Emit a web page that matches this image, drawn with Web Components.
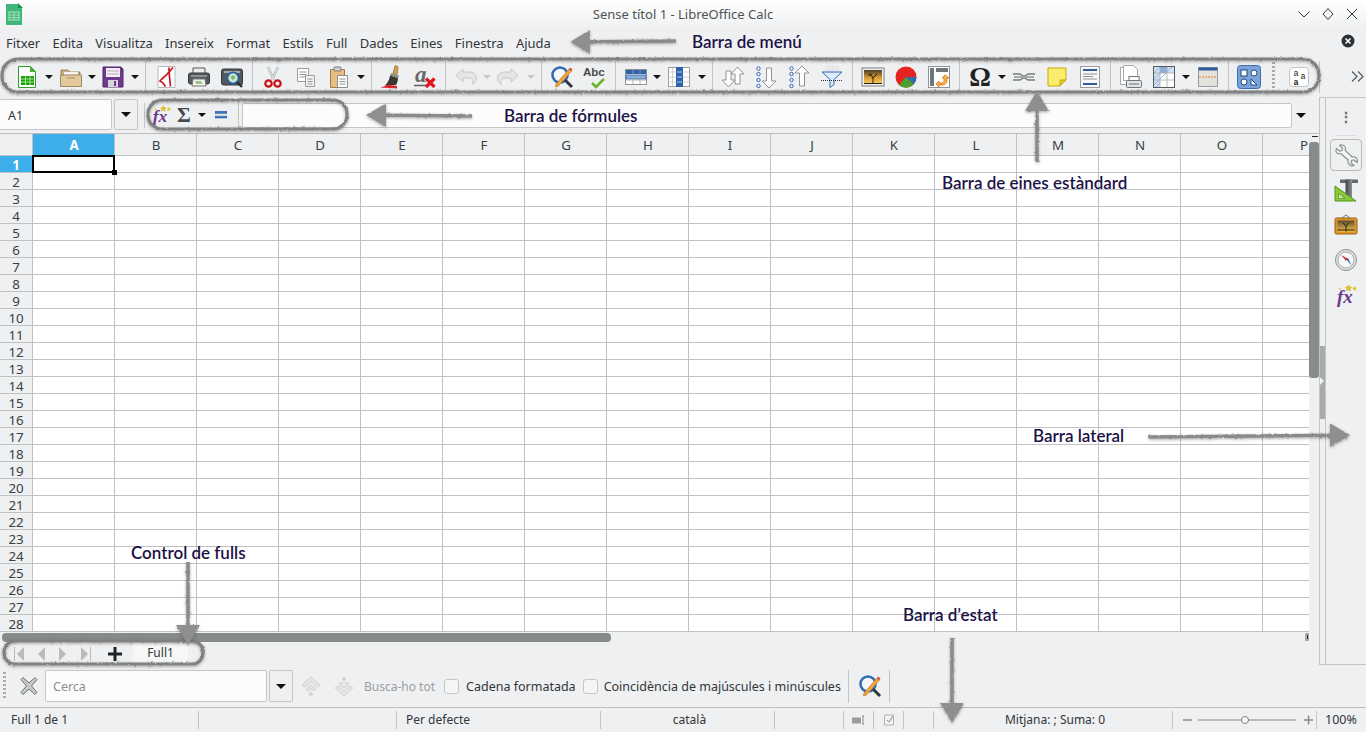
<!DOCTYPE html>
<html lang="ca">
<head>
<meta charset="UTF-8">
<title>Sense títol 1 - LibreOffice Calc</title>
<style>
  html, body { margin: 0; padding: 0; height: 100%; overflow: hidden; background: #eff0f1; }
  body { font: 12.5px "Noto Sans", sans-serif; color: #31363b; }
</style>
</head>
<body>
<lo-app>
  <lo-titlebar slot="title">Sense títol 1 - LibreOffice Calc</lo-titlebar>
  <lo-menubar slot="menu"></lo-menubar>
  <lo-toolbar slot="tools"></lo-toolbar>
  <lo-formulabar slot="formula"></lo-formulabar>
  <lo-sheet slot="sheet"></lo-sheet>
  <lo-sheetbar slot="tabs"></lo-sheetbar>
  <lo-sidebar slot="side"></lo-sidebar>
  <lo-findbar slot="find"></lo-findbar>
  <lo-statusbar slot="status"></lo-statusbar>
  <lo-notes slot="notes"></lo-notes>
</lo-app>
<script>
// small icon set, all on a 24 box
const ICONS = {
  new: `<path d="M3.5 1.5h12l5 5v16h-17z" fill="#fff" stroke="#2f9e2a"/><path d="M15 1l6 6h-6z" fill="#43b02a"/><rect x="6" y="11" width="13" height="9" fill="#18a303"/><path d="M6 14h13M6 17h13M10.5 11v9M15 11v9" stroke="#c9efc4" stroke-width=".8"/>`,
  open: `<path d="M2 5h7l2 2h10v3H2z" fill="#c7ad84" stroke="#8c7350" stroke-width=".8"/><path d="M5 7h14v5H5z" fill="#f4f4f1"/><path d="M1.5 10h21v11.5h-21z" fill="#e3c99c" stroke="#a08860"/><path d="M8 13h8" stroke="#a08860"/>`,
  save: `<path d="M2 2h18l2 2v18H2z" fill="#6f3a8c" stroke="#50256a"/><rect x="5" y="3" width="14" height="9" fill="#f2f0f4"/><path d="M6 6h12M6 9h12" stroke="#b9a8c6"/><rect x="7" y="15" width="10" height="7" fill="#d7d2dc"/><rect x="13" y="16" width="2" height="5" fill="#6f3a8c"/>`,
  pdf: `<path d="M4 1.500h17v21H4z" fill="#fff" stroke="#b9b9b9"/><path d="M19 2.500C15 7 14 9 9 13c-1.500 1.200-2 2-3 3 3 1 4 3 5.500 5.500M15 2.500c0 7 1 13 1.500 19" fill="none" stroke="#c8171d" stroke-width="1.700"/>`,
  print: `<path d="M6 3h12v6H6z" fill="#eee" stroke="#555"/><rect x="1.5" y="8" width="21" height="11" rx="2" fill="#55595b" stroke="#34383a"/><rect x="4" y="10" width="16" height="2" fill="#8a8e90"/><path d="M6 14h12l1 7H5z" fill="#f3f6ee" stroke="#777"/><path d="M8 16h6l2 3H9z" fill="#9cc38f"/>`,
  preview: `<rect x="1.5" y="4" width="21" height="16" rx="2" fill="#55595b" stroke="#34383a"/><rect x="4" y="6" width="16" height="2" fill="#a5a8aa"/><circle cx="13" cy="13" r="5.6" fill="#cfe4c9" stroke="#1d5fa8" stroke-width="1.8"/><path d="M10.5 12l3-2 2 3-3 2z" fill="#7fb16f"/><path d="M17 17l5 5" stroke="#2b2f31" stroke-width="2.4"/>`,
  cut: `<path d="M7 2l6 13M17 2l-6 13" stroke="#b4b8ba" stroke-width="2.4"/><path d="M7 2l6 13M17 2l-6 13" stroke="#eceeef" stroke-width=".8"/><circle cx="7.5" cy="18.5" r="3.2" fill="#f6e5e5" stroke="#c3141c" stroke-width="2.2"/><circle cx="16.5" cy="18.5" r="3.2" fill="#f6e5e5" stroke="#c3141c" stroke-width="2.2"/>`,
  copy: `<path d="M3.5 3.5h11v13h-11z" fill="#fff" stroke="#9a9c9d"/><path d="M5.5 7h7M5.5 9.5h7M5.5 12h7" stroke="#8f9294"/><path d="M11.5 10.5h9v11h-9z" fill="#f4f4f4" stroke="#9a9c9d"/><path d="M13.5 14h5M13.5 16.5h5M13.5 19h5" stroke="#8f9294"/>`,
  paste: `<path d="M3.5 4.5h14v18h-14z" fill="#e8bd85" stroke="#a17a45"/><rect x="7" y="2" width="7" height="4" rx="1" fill="#cfd1d2" stroke="#777"/><path d="M10.5 10.5h10v12h-10z" fill="#fdfdfd" stroke="#8e8f90"/><path d="M12.5 14h6M12.5 16.5h6M12.5 19h6" stroke="#8f9294"/>`,
  brush: `<path d="M15 1c2-.5 3.500.5 3 2.500L17 9.500l-4-1z" fill="#d4a24c" stroke="#8a6420" stroke-width=".7"/><path d="M11 8l8 2.500-.8 2.500-8.200-2.500z" fill="#8e8f90"/><path d="M10 10.500l8 2.500c0 3-1 5.500-2 7H5c3-2 4.500-6 5-9.500z" fill="#3b3733"/><path d="M0 22.500c3-.5 5-1.500 7-3l10 1.500v2.500z" fill="#d7262c"/>`,
  clear: `<text x="2" y="17" font-family="Liberation Serif" font-style="italic" font-weight="700" font-size="23" fill="#66696c">a</text><path d="M1 20.500h14" stroke="#66696c" stroke-width="1.600"/><path d="M13 13.500l8.500 8.500M21.500 13.500L13 22" stroke="#e0161f" stroke-width="3.200"/>`,
  undo: `<path d="M9 4L2 10.500 9 17v-4h6c3 0 4 2 4 3.500 0 1.500-.5 2.500-1 3 3-1 4.500-3.500 4.500-6 0-3.500-3-6.500-7-6.500H9z" fill="#e4e5e6" stroke="#c6c8c9"/>`,
  redo: `<path d="M15 4l7 6.500L15 17v-4H9c-3 0-4 2-4 3.500 0 1.500.5 2.500 1 3-3-1-4.500-3.500-4.500-6C1.500 10 4.500 7 8.500 7H15z" fill="#e4e5e6" stroke="#c6c8c9"/>`,
  find: `<circle cx="10" cy="10" r="7.500" fill="#f4f8fc" stroke="#2f6db5" stroke-width="2.600"/><path d="M15 15l7 7" stroke="#30363a" stroke-width="3"/><path d="M6 19L19 4l2.500 2L8.500 21l-3 1z" fill="#f2a33c" stroke="#b86f17" stroke-width=".6"/><path d="M19 4l1-1.500 2.500 2L21.500 6z" fill="#d8434a"/>`,
  spell: `<text x="0" y="11" font-family="Liberation Sans" font-weight="700" font-size="11.500" fill="#444b4f">Abc</text><path d="M9 18l4 4 8-8" fill="none" stroke="#6cb52a" stroke-width="2.600"/>`,
  rowtbl: `<rect x="1.500" y="4.500" width="21" height="15" fill="#fff" stroke="#8f9294"/><rect x="2" y="5" width="20" height="4" fill="#2f62ad"/><rect x="2" y="10" width="20" height="4" fill="#8cb0dd" stroke="#2f62ad" stroke-width=".8"/><path d="M9 5v14M16 5v14M2 15h20" stroke="#9ea2a5" stroke-width=".8"/>`,
  coltbl: `<rect x="1.500" y="2.500" width="21" height="19" fill="#fff" stroke="#9ea2a5"/><rect x="9" y="2" width="7" height="20" fill="#2f62ad"/><path d="M10 7h5M10 12h5M10 17h5" stroke="#b7cdea"/><path d="M2 7h7M2 12h7M2 17h7M16 7h6M16 12h6M16 17h6M5.500 3v18" stroke="#c4c6c8" stroke-width=".8"/>`,
  sort: `<path d="M7.500 22L1 15h4V6h5v9h4z" fill="#fff" stroke="#8f9294"/><path d="M16.500 2L23 9h-4v10h-5V9h-4z" fill="#fff" stroke="#8f9294"/>`,
  asc: `<circle cx="4.500" cy="3.500" r="1.700" fill="#fff" stroke="#2f62ad"/><circle cx="4.500" cy="9" r="1.700" fill="#fff" stroke="#2f62ad"/><circle cx="4.500" cy="15" r="1.700" fill="#fff" stroke="#2f62ad"/><circle cx="4.500" cy="21" r="1.700" fill="#fff" stroke="#2f62ad"/><path d="M15 23l-7-7h4.500V3h5v13H22z" fill="#fff" stroke="#8f9294"/>`,
  desc: `<circle cx="4.500" cy="3.500" r="1.700" fill="#fff" stroke="#2f62ad"/><circle cx="4.500" cy="9" r="1.700" fill="#fff" stroke="#2f62ad"/><circle cx="4.500" cy="15" r="1.700" fill="#fff" stroke="#2f62ad"/><circle cx="4.500" cy="21" r="1.700" fill="#fff" stroke="#2f62ad"/><path d="M15 1l7 7h-4.500v13h-5V8H8z" fill="#fff" stroke="#8f9294"/>`,
  filter: `<path d="M5 1h14v5H5z" fill="#dfe1e2"/><path d="M5 2.500h14M5 4.500h14" stroke="#fff" stroke-dasharray="1 1"/><path d="M2 7h20l-8 7.500v5l-4 3v-8z" fill="#dcebfa" stroke="#2f6db5"/><path d="M1 15.500h22" stroke="#333" stroke-dasharray="1 1"/>`,
  image: `<defs><linearGradient id="sky" x1="0" y1="0" x2="0" y2="1"><stop offset="0" stop-color="#4c3c25"/><stop offset=".55" stop-color="#d99a37"/><stop offset="1" stop-color="#f7cf5d"/></linearGradient></defs><rect x="1" y="3" width="22" height="18" fill="#f1f1f1" stroke="#7b7d7f"/><rect x="3" y="5" width="18" height="14" fill="url(#sky)"/><path d="M12 19v-6l-3-5M12 13l4-4M10 10l-3 0M3 18.500h18" stroke="#26200f" fill="none"/>`,
  chart: `<circle cx="12" cy="12" r="10.500" fill="#e62323"/><path d="M12 12L20 19A10.500 10.500 0 0 1 5 20z" fill="#4aa02c"/><path d="M12 12L22.500 12A10.500 10.500 0 0 1 20 19z" fill="#2f6db5"/>`,
  pivot: `<rect x="1.500" y="1.500" width="21" height="21" fill="#fff" stroke="#8f9294"/><rect x="3" y="3" width="4" height="18" fill="#70757a"/><rect x="9" y="3" width="12" height="4" fill="#70757a"/><path d="M18 10l-3 3h2v3c0 1-1 2-2 2h-3v-2l-3 3 3 3v-2h3c3 0 5-2 5-4v-3h2z" fill="#fbb24c" stroke="#d6730e" stroke-width=".8"/>`,
  omega: `<text x="12" y="20.500" text-anchor="middle" font-family="Liberation Serif" font-weight="700" font-size="27" fill="#222">Ω</text>`,
  link: `<path d="M1 9h7l3 2h2l3-2h7M1 15h7l3-2h2l3 2h7" fill="none" stroke="#77797b" stroke-width="1.300"/><path d="M2 12h20" stroke="#a7a9ab" stroke-width="2"/>`,
  note: `<path d="M3 3h18v12l-6 6H3z" fill="#fcee6d" stroke="#c6a800"/><path d="M15 21v-6h6z" fill="#e3c92e" stroke="#c6a800"/>`,
  header: `<rect x="2.500" y="1.500" width="19" height="21" fill="#f7f7f7" stroke="#9a9c9d"/><rect x="5" y="4" width="14" height="2" fill="#2f5c9e"/><path d="M5 9h14M5 11.500h10M5 14h14" stroke="#8f9294"/><rect x="5" y="18" width="14" height="2" fill="#2f5c9e"/>`,
  area: `<path d="M1.500 2.500h9l3 3v14h-12z" fill="#fff" stroke="#a7a9ab"/><path d="M4.500 .5h10l4 4v11h-14z" fill="#fff" stroke="#a7a9ab"/><rect x="7.500" y="15.500" width="15" height="7" rx="1" fill="#e0e1e2" stroke="#70757a"/><rect x="10" y="11.500" width="10" height="4" fill="#fff" stroke="#70757a"/><path d="M10 19h10" stroke="#70757a"/>`,
  freeze: `<rect x="1.500" y="1.500" width="21" height="21" fill="#fff" stroke="#55595b"/><path d="M2 2h20v6H8v14H2z" fill="#cfe0f2"/><path d="M2 8l6-6M2 14l12-12M2 20L20 2M4 22l4-4" stroke="#8cb0dd" stroke-width=".9"/><rect x="8" y="2" width="7" height="6" fill="#8cb0dd"/><path d="M8 2v20M15 2v20M2 8h20M2 15h20" stroke="#a7a9ab" stroke-width=".8"/>`,
  split: `<rect x="2.500" y="2.500" width="19" height="19" fill="#e3e3dd" stroke="#9a9c9d"/><rect x="2.500" y="2.500" width="19" height="3" fill="#2f5c9e"/><path d="M3 12h18" stroke="#f07c12" stroke-dasharray="2 1"/>`,
  shapes: `<rect x=".500" y=".500" width="23" height="23" rx="3" fill="#7ba3d8" stroke="#3f6fae"/><rect x="4" y="5" width="6" height="6" fill="#fff" stroke="#1e4a86"/><circle cx="17" cy="8" r="3" fill="#fff" stroke="#1e4a86"/><circle cx="7" cy="17" r="3" fill="#fff" stroke="#1e4a86"/><path d="M14 14l6 6h-6z" fill="#fff" stroke="#1e4a86"/>`,
  aa: `<rect x="2.500" y="2.500" width="19" height="19" rx="3" fill="#fff" stroke="#c0c2c3"/><text x="9" y="10.500" text-anchor="middle" font-family="Liberation Mono" font-size="8.500" fill="#222">a</text><text x="16" y="14" text-anchor="middle" font-family="Liberation Mono" font-size="8.500" fill="#222">a</text><text x="9" y="20" text-anchor="middle" font-family="Liberation Mono" font-size="8.500" font-weight="700" fill="#222">a</text>`,
  fx: `<text x="3" y="20" font-family="Liberation Serif" font-style="italic" font-weight="700" font-size="19" fill="#6d3a8e">fx</text><path d="M14.500 2l1 2 2 .3-1.500 1.500.3 2-1.800-1-1.800 1 .3-2L11.500 4.300l2-.3z" fill="#e3c22c" stroke="#d0ac10" stroke-width=".6"/><path d="M20.500 3l.8 1.500 1.700.2-1.200 1.200.3 1.700-1.600-.8-1.500.8.300-1.700-1.200-1.200 1.700-.2z" fill="#e3c22c"/><circle cx="6" cy="6" r="1" fill="#e3c22c"/>`,
  sigma: `<text x="12" y="20" text-anchor="middle" font-family="Liberation Serif" font-weight="700" font-size="23" fill="#444b4f">Σ</text>`,
  equal: `<path d="M3 6h18v4H3zM3 13h18v4H3z" fill="#2f62ad"/><path d="M4 7.500h16M4 14.500h16" stroke="#8cb0dd" stroke-width=".8"/>`,
  wrench: `<path d="M2.500 5.500L5.500 8 8 7.500 8.500 5 5.500 2.500C8 1 11 2.500 11.500 5.500c0 1 0 1.500-.3 2l7 6.500c.5-.2 1.200-.3 1.800-.2 2.600.4 4 3 3 5.700l-3-2.500-2.500.5-.5 2.500 3 2.500c-3 1.200-6-1-6-3.800 0-.6 0-1.200.2-1.700L6.700 10.500c-.5.2-1 .3-1.700.3C2.500 10.500.8 8 2.500 5.500z" fill="#f3f4f4" stroke="#8f9294" stroke-width="1.200"/>`,
  props: `<defs><linearGradient id="tb" x1="0" y1="0" x2="1" y2="0"><stop offset="0" stop-color="#3f4345"/><stop offset="1" stop-color="#8f9294"/></linearGradient></defs><rect x="6" y="1.500" width="18" height="3.500" fill="#666a6c"/><rect x="11.500" y="1.500" width="6.500" height="20" fill="url(#tb)"/><path d="M1 8l21 15H1z" fill="#8dc63f" stroke="#4f9a14"/><path d="M4.500 15.500l6.500 5H4.500z" fill="#d9ecb8" stroke="#4f9a14" stroke-width=".8"/>`,
  gallery: `<path d="M8 5l4-3 4 3" fill="none" stroke="#555" stroke-width=".8"/><rect x="1" y="5" width="22" height="16" rx="1.500" fill="#e0962a" stroke="#94600f"/><defs><linearGradient id="gs" x1="0" y1="0" x2="0" y2="1"><stop offset="0" stop-color="#5a4a30"/><stop offset="1" stop-color="#f2c04f"/></linearGradient></defs><rect x="3.500" y="7.500" width="17" height="11" fill="url(#gs)"/><path d="M12 18.500v-5l-3-4M12 13.500l3-4M3.500 17h17" stroke="#2a200e" fill="none"/>`,
  compass: `<circle cx="12" cy="12" r="10.500" fill="#dfe1e2" stroke="#8f9294"/><circle cx="12" cy="12" r="8" fill="#f7f8f8" stroke="#a9abad"/><path d="M7 7l6.500 3.500L12 13z" fill="#d8343b"/><path d="M12 11l2-1 3.500 7.500z" fill="#2f62ad"/>`,
  close: `<path d="M4 5.500L6 3.500l6 5.500 6-5.500 2 2-5.500 6.500 5.500 6.500-2 2-6-5.500-6 5.500-2-2 5.500-6.500z" fill="#c9cbcb" stroke="#6b6e70"/>`,
  up: `<path d="M12 3l9 8-3 2-6-5-6 5-3-2z" fill="#e4e5e6" stroke="#d0d2d3"/><path d="M12 11l5 4-2 2-3-2.500L9 17l-2-2z" fill="#e4e5e6" stroke="#d0d2d3"/><circle cx="12" cy="20" r="2" fill="#d0d2d3"/>`,
  down: `<path d="M12 22l9-8-3-2-6 5-6-5-3 2z" fill="#e4e5e6" stroke="#d0d2d3"/><path d="M12 14l5-4-2-2-3 2.500L9 8l-2 2z" fill="#e4e5e6" stroke="#d0d2d3"/><circle cx="12" cy="5" r="2" fill="#d0d2d3"/>`
};

class LoIcon extends HTMLElement {
  connectedCallback() {
    const size = this.getAttribute('size') || 24;
    this.attachShadow({mode: 'open'}).innerHTML = `
      <style>:host { display: inline-flex; width: ${size}px; height: ${size}px; } svg { display: block; overflow: visible; }</style>
      <svg width="${size}" height="${size}" viewBox="0 0 24 24">${ICONS[this.getAttribute('name')] || ''}</svg>`;
  }
}

class LoApp extends HTMLElement {
  constructor() {
    super();
    this.attachShadow({mode: 'open'}).innerHTML = `
      <style>
        :host { display: flex; flex-direction: column; width: 1366px; height: 732px; position: relative; overflow: hidden; background: #eff0f1; }
        .main { display: flex; height: 568px; }
        .left { width: 1319px; display: flex; flex-direction: column; }
      </style>
      <slot name="title"></slot>
      <slot name="menu"></slot>
      <slot name="tools"></slot>
      <div class="main">
        <div class="left">
          <slot name="formula"></slot>
          <slot name="sheet"></slot>
          <slot name="tabs"></slot>
        </div>
        <slot name="side"></slot>
      </div>
      <slot name="find"></slot>
      <slot name="status"></slot>
      <slot name="notes"></slot>`;
  }
}

class LoTitlebar extends HTMLElement {
  constructor() {
    super();
    this.attachShadow({mode: 'open'}).innerHTML = `
      <style>
        :host { display: flex; align-items: center; height: 29px; padding: 0 6px 1px 4px; box-sizing: border-box; background: linear-gradient(#fff, #eff0f1); font-size: 13px; color: #4d5357; }
        .side { width: 64px; display: flex; }
        .name { flex: 1; text-align: center; margin-left: 2px; }
        .btns { gap: 8px; }
      </style>
      <div class="side"><svg width="20" height="22" viewBox="0 0 20 22"><path d="M2 1h12l4 4v18H2z" fill="#3fb67a"/><path d="M14 0l5 5h-5z" fill="#1e8d55"/><rect x="5" y="9" width="10" height="8" fill="none" stroke="#b6e6cb"/><path d="M5 12h10M5 14.500h10M10 9v8" stroke="#b6e6cb" stroke-width=".8"/></svg></div>
      <div class="name"><slot></slot></div>
      <div class="side btns">
        <svg width="16" height="16" viewBox="0 0 16 16"><path d="M2.500 5.500L8 11l5.500-5.500" fill="none" stroke="#31363b"/></svg>
        <svg width="16" height="16" viewBox="0 0 16 16"><path d="M8 2.500L13 8l-5 5.500L3 8z" fill="none" stroke="#31363b"/></svg>
        <svg width="16" height="16" viewBox="0 0 16 16"><path d="M3 3l10 10M13 3L3 13" fill="none" stroke="#31363b"/></svg>
      </div>`;
  }
}

class LoMenubar extends HTMLElement {
  constructor() {
    super();
    const items = ['Fitxer','Edita','Visualitza','Insereix','Format','Estils','Full','Dades','Eines','Finestra','Ajuda'];
    this.attachShadow({mode: 'open'}).innerHTML = `
      <style>
        :host { display: flex; align-items: center; gap: 12.3px; height: 28px; padding: 0 6px; font-size: 13px; }
        .x { position: absolute; left: 1341px; top: 34px; }
      </style>
      ${items.map(i => `<span>${i}</span>`).join('')}
      <svg class="x" width="14" height="14" viewBox="0 0 14 14"><circle cx="7" cy="7" r="6.500" fill="#2d3134"/><path d="M4.500 4.500l5 5M9.500 4.500l-5 5" stroke="#fff" stroke-width="1.500"/></svg>`;
  }
}

class LoToolbar extends HTMLElement {
  constructor() {
    super();
    // name, or |sep, or v<width> for the small drop arrows
    const seq = ['new','v11','open','v9','save','v12','|','pdf','print','preview','|','cut','copy','paste','v12','|','brush','clear','|','undo','g9','redo','g13','|','find','spell','|','rowtbl','v10','coltbl','v13','|','sort','asc','desc','filter','|','image','chart','pivot','|','omega','v11','link','note','header','|','area','freeze','v11','split','|','shapes','grip','aa','|'];
    const html = seq.map(s => {
      if (s === '|') return '<i class="sep"></i>';
      if (s === 'grip') return '<i class="grip"></i>';
      if (s[0] === 'v' && /\d/.test(s[1])) return `<b class="drop" style="width:${s.slice(1)}px"></b>`;
      if (s[0] === 'g' && /\d/.test(s[1])) return `<b class="drop off" style="width:${s.slice(1)}px"></b>`;
      return `<span class="btn"><lo-icon name="${s}"></lo-icon></span>`;
    }).join('');
    this.attachShadow({mode: 'open'}).innerHTML = `
      <style>
        :host { display: flex; align-items: center; height: 40px; padding-left: 10px; position: relative; }
        .btn { width: 33px; display: flex; justify-content: center; }
        .sep { width: 1px; height: 32px; background: #c3c5c6; margin: 0 3px 0 4px; }
        .grip { width: 3px; height: 30px; margin: 0 7px 0 7px; background: repeating-linear-gradient(#a9abad 0 2px, transparent 2px 4px); }
        .drop { position: relative; height: 10px; }
        .drop::after { content: ""; position: absolute; left: calc(50% - 4px); top: 3px; border: 4px solid transparent; border-top: 4px solid #111; border-bottom: 0; }
        .off::after { border-top-color: #c6c8c9; }
        .more { position: absolute; left: 1351px; top: 13px; }
      </style>
      ${html}
      <svg class="more" width="13" height="13" viewBox="0 0 13 13"><path d="M1 1.500L6 6.500 1 11.500M7 1.500l5 5-5 5" fill="none" stroke="#55595b" stroke-width="1.200"/></svg>`;
  }
}

class LoFormulabar extends HTMLElement {
  constructor() {
    super();
    this.attachShadow({mode: 'open'}).innerHTML = `
      <style>
        :host { display: flex; align-items: center; height: 37px; box-sizing: border-box; border-bottom: 1px solid #bcbebf; flex: none; }
        .name { width: 112px; height: 31px; box-sizing: border-box; margin-bottom: 1px; padding-left: 8px; line-height: 31px; background: #fcfcfc; border: 1px solid #c4c6c7; border-left: 0; border-radius: 0 2px 2px 0; font-size: 12.5px; }
        .dd { width: 24px; height: 31px; box-sizing: border-box; margin: 0 0 1px 2px; border: 1px solid #c4c6c7; border-radius: 2px; display: flex; align-items: center; justify-content: center; }
        .dd::after, .d2::after, .d3::after { content: ""; border: 5px solid transparent; border-top: 5px solid #111; border-bottom: 0; }
        .sep { width: 1px; height: 25px; background: #c3c5c6; }
        .ic { display: flex; justify-content: center; }
        .d2 { width: 8px; display: flex; justify-content: center; margin-left: 3px; }
        .d2::after { border-width: 4px; border-top-width: 4px; }
        .input { width: 1050px; height: 25px; box-sizing: border-box; border: 1px solid #c4c6c7; border-radius: 2px; background: #fcfcfc; margin-left: 3px; }
        .d3 { width: 18px; display: flex; justify-content: center; }
      </style>
      <div class="name">A1</div>
      <div class="dd"></div>
      <i class="sep" style="margin-left:6px"></i>
      <span class="ic" style="margin-left:5px"><lo-icon name="fx" size="22"></lo-icon></span>
      <span class="ic" style="margin-left:1px"><lo-icon name="sigma" size="22"></lo-icon></span>
      <b class="d2"></b>
      <span class="ic" style="margin-left:7px"><lo-icon name="equal" size="16"></lo-icon></span>
      <i class="sep" style="margin-left:9px"></i>
      <div class="input"></div>
      <div class="d3"></div>`;
  }
}

class LoSheet extends HTMLElement {
  constructor() {
    super();
    const cols = 'ABCDEFGHIJKLMNOP'.split('');
    let cells = '<div class="h corner"></div>';
    cols.forEach((c, i) => cells += `<div class="h ${i ? '' : 'on'}">${c}</div>`);
    for (let r = 1; r <= 28; r++) {
      cells += `<div class="h rn ${r === 1 ? 'on' : ''}">${r}</div>`;
      cols.forEach(() => cells += '<div class="c"></div>');
    }
    this.attachShadow({mode: 'open'}).innerHTML = `
      <style>
        :host { display: block; position: relative; flex: none; height: 508px; overflow: hidden; background: #eff0f1; }
        .grid { display: grid; grid-template-columns: 33px repeat(16, 82px); grid-template-rows: 22px repeat(28, 17px); width: 1309px; height: 498px; overflow: hidden; background: #fff; }
        .h { background: #eff0f1; border-right: 1px solid #c0c1c2; border-bottom: 1px solid #c0c1c2; box-sizing: border-box; text-align: center; font-size: 13.33px; line-height: 23px; color: #3a3f43; padding-left: 1px; }
        .rn { line-height: 18px; font-size: 13.33px; padding-left: 0; overflow: hidden; }
        .on { background: #3daee9; color: #fff; font-weight: 700; }
        .c { border-right: 1px solid #c0c1c2; border-bottom: 1px solid #c0c1c2; box-sizing: border-box; }
        .cursor { position: absolute; left: 32px; top: 21px; width: 83px; height: 18px; box-sizing: border-box; border: 2px solid #000; }
        .cursor::after { content: ""; position: absolute; right: -4px; bottom: -4px; width: 5px; height: 5px; background: #000; }
        .vs { position: absolute; left: 1309px; top: 0; width: 10px; height: 498px; background: #eff0f1; }
        .vs i { position: absolute; left: 0; top: 8px; width: 10px; height: 236px; background: #888b8b; border-radius: 3px; }
        .vs b { position: absolute; left: 3px; top: 2px; width: 6px; height: 1px; background: #222; }
        .hs { position: absolute; left: 2px; top: 499px; width: 609px; height: 9px; background: #888b8b; border-radius: 4px; }
        .tick { position: absolute; left: 1305px; top: 499px; width: 4px; height: 8px; background: #a9abad; }
        .tick::after { content: ""; position: absolute; left: 1.500px; top: 2px; width: 1px; height: 4px; background: #222; }
      </style>
      <div class="grid">${cells}</div>
      <div class="cursor"></div>
      <div class="vs"><b></b><i></i></div>
      <div class="hs"></div>
      <div class="tick"></div>`;
  }
}

class LoSheetbar extends HTMLElement {
  constructor() {
    super();
    this.attachShadow({mode: 'open'}).innerHTML = `
      <style>
        :host { display: flex; align-items: center; height: 23px; flex: none; font-size: 12px; }
        svg { display: block; flex: none; }
        .tab { width: 55px; height: 21px; margin-left: 10px; background: #f6f7f7; text-align: center; line-height: 20px; }
      </style>
      <svg style="margin-left:13px" width="80" height="16" viewBox="0 0 80 16" fill="#b9bbbc">
        <path d="M1 1h1v14H1zM11 1v14L4 8z"/><path d="M32 1v14l-7-7z"/><path d="M46 1v14l7-7z"/><path d="M68 1v14l7-7zM77 1h1v14h-1z"/>
      </svg>
      <svg style="margin-left:14px" width="16" height="16" viewBox="0 0 16 16"><path d="M6.500 1h3v5.500H15v3H9.500V15h-3V9.500H1v-3h5.500z" fill="#1f2326"/></svg>
      <div class="tab">Full1</div>`;
  }
}

class LoSidebar extends HTMLElement {
  constructor() {
    super();
    this.attachShadow({mode: 'open'}).innerHTML = `
      <style>
        :host { display: flex; width: 47px; height: 568px; box-sizing: border-box; border-top: 1px solid #c3c5c6; border-bottom: 1px solid #c3c5c6; }
        .split { width: 7px; box-sizing: border-box; border-left: 1px solid #c3c5c6; border-right: 1px solid #c3c5c6; position: relative; }
        .split i { position: absolute; left: 0; top: 248px; width: 5px; height: 73px; background: #a9abab; }
        .split b { position: absolute; left: 0; top: 279px; border: 4px solid transparent; border-left: 4px solid #f2f3f3; border-right: 0; }
        .deck { flex: 1; display: flex; flex-direction: column; align-items: center; }
        .dots { height: 37px; line-height: 37px; color: #666; font-size: 14px; font-weight: 700; }
        .rule { width: 22px; height: 1px; background: #dcdde0; margin-bottom: 3px; }
        .tab { width: 32px; height: 32px; box-sizing: border-box; display: flex; align-items: center; justify-content: center; margin-bottom: 3px; border: 1px solid transparent; }
        .tab.on { border-color: #b6b8b9; border-radius: 4px; }
      </style>
      <div class="split"><i></i><b></b></div>
      <div class="deck">
        <div class="dots">⋮</div>
        <div class="rule"></div>
        <div class="tab on"><lo-icon name="wrench"></lo-icon></div>
        <div class="tab"><lo-icon name="props"></lo-icon></div>
        <div class="tab"><lo-icon name="gallery"></lo-icon></div>
        <div class="tab"><lo-icon name="compass"></lo-icon></div>
        <div class="tab"><lo-icon name="fx"></lo-icon></div>
      </div>`;
  }
}

class LoFindbar extends HTMLElement {
  constructor() {
    super();
    this.attachShadow({mode: 'open'}).innerHTML = `
      <style>
        :host { display: flex; align-items: center; height: 43px; box-sizing: border-box; border-bottom: 1px solid #bcbebf; font-size: 12.5px; }
        .grip { width: 3px; height: 28px; margin-left: 3px; background: repeating-linear-gradient(#a9abad 0 2px, transparent 2px 4px); }
        .x { margin-left: 11px; }
        .in { width: 222px; height: 32px; margin-left: 4px; padding-left: 7px; box-sizing: border-box; line-height: 31px; background: #fcfcfc; border: 1px solid #c4c6c7; border-radius: 2px; color: #8a8e91; }
        .dd { width: 24px; height: 32px; margin-left: 2px; box-sizing: border-box; border: 1px solid #c4c6c7; border-radius: 2px; display: flex; align-items: center; justify-content: center; }
        .dd::after { content: ""; border: 5px solid transparent; border-top: 5px solid #111; border-bottom: 0; }
        .cb { width: 15px; height: 15px; box-sizing: border-box; border: 1px solid #c4c6c7; border-radius: 3px; background: #f4f5f5; margin-right: 6px; }
        .off { color: #9a9ea1; font-size: 12px; }
        .sep { width: 1px; height: 33px; background: #c3c5c6; }
      </style>
      <i class="grip"></i>
      <lo-icon class="x" name="close"></lo-icon>
      <div class="in">Cerca</div>
      <div class="dd"></div>
      <lo-icon name="up" style="margin-left:6px"></lo-icon>
      <lo-icon name="down" style="margin-left:9px"></lo-icon>
      <span class="off" style="margin-left:8px">Busca-ho tot</span>
      <i class="cb" style="margin:0 7px 0 9px"></i><span>Cadena formatada</span>
      <i class="cb" style="margin-left:7px"></i><span>Coincidència de majúscules i minúscules</span>
      <i class="sep" style="margin-left:7px"></i>
      <lo-icon name="find" style="margin:0 7px 0 9px"></lo-icon>
      <i class="sep"></i>`;
  }
}

class LoStatusbar extends HTMLElement {
  constructor() {
    super();
    this.attachShadow({mode: 'open'}).innerHTML = `
      <style>
        :host { display: grid; grid-template-columns: 199px 198px 204px 174px 69px 30px 30px 30px 239px 144px 50px; height: 24px; align-items: center; font-size: 12px; }
        div { height: 18px; line-height: 18px; box-sizing: border-box; border-right: 1px solid #c3c5c6; white-space: nowrap; }
        div:last-child { border: 0; }
        .c { text-align: center; padding-left: 4px; }
        .ic { display: flex; align-items: center; justify-content: center; }
        .zoom { display: flex; align-items: center; padding-left: 10px; }
      </style>
      <div style="padding-left:11px">Full 1 de 1</div>
      <div></div>
      <div style="padding-left:9px">Per defecte</div>
      <div class="c">català</div>
      <div></div>
      <div class="ic"><svg width="13" height="10" viewBox="0 0 13 10"><rect x="0" y="2.500" width="9" height="6" fill="#9a9c9d"/><path d="M11 1v8M10 1h2M10 9h2" stroke="#8a8c8d"/></svg></div>
      <div class="ic"><svg width="12" height="12" viewBox="0 0 12 12"><path d="M1.500 1h9v10h-9z" fill="none" stroke="#b1b3b4"/><path d="M4 6l2 2 4-6" fill="none" stroke="#8a8c8d"/></svg></div>
      <div></div>
      <div class="c">Mitjana: ; Suma: 0</div>
      <div class="zoom"><svg width="130" height="14" viewBox="0 0 130 14">
        <path d="M0 7h9M121 7h9M125.500 2.500v9" stroke="#8a8c8d" stroke-width="1.500" fill="none"/>
        <path d="M15 7h98" stroke="#a9abad" stroke-width="1.500"/>
        <circle cx="62" cy="7" r="3.500" fill="#fdfdfd" stroke="#7b7d7f"/>
      </svg></div>
      <div style="padding-left:8px;font-size:12.5px">100%</div>`;
  }
}

// the hand drawn marks on top of the window, these sit on a free canvas
class LoNotes extends HTMLElement {
  constructor() {
    super();
    const labels = [
      ['Barra de menú', 692, 32], ['Barra de fórmules', 504, 106], ['Barra de eines estàndard', 942, 173],
      ['Barra lateral', 1033, 426], ['Control de fulls', 131, 543], ['Barra d’estat', 903, 605]
    ];
    const arrow = (x1, y1, x2, y2) => {
      const a = Math.atan2(y2 - y1, x2 - x1), l = 20, w = 12;
      const bx = x2 - Math.cos(a) * l, by = y2 - Math.sin(a) * l;
      const nx = -Math.sin(a) * w, ny = Math.cos(a) * w;
      return `<path d="M${x1} ${y1}L${bx} ${by}" stroke="#8a8a8a" stroke-width="3.500" fill="none"/>
        <path d="M${x2} ${y2}L${bx + nx} ${by + ny}L${bx - nx} ${by - ny}z" fill="#8f8f8f"/>`;
    };
    this.attachShadow({mode: 'open'}).innerHTML = `
      <style>
        :host { position: absolute; inset: 0; pointer-events: none; display: block; }
        svg { position: absolute; left: 0; top: 0; }
        span { position: absolute; font: 600 17px/20px Lato, sans-serif; color: #1b1147; white-space: nowrap; }
      </style>
      <svg width="1366" height="732" viewBox="0 0 1366 732">
        <defs>
          <filter id="rough" x="-5%" y="-30%" width="110%" height="160%">
            <feTurbulence type="fractalNoise" baseFrequency=".35" numOctaves="2" seed="4"/>
            <feDisplacementMap in="SourceGraphic" scale="2.500" xChannelSelector="R" yChannelSelector="G"/>
            <feGaussianBlur stdDeviation=".5" result="m"/>
            <feDropShadow dx="0" dy="1" stdDeviation="1.500" flood-color="#000" flood-opacity=".35"/>
          </filter>
        </defs>
        <g filter="url(#rough)">
          <rect x="2" y="59" width="1317" height="33" rx="16" fill="none" stroke="#808182" stroke-width="3.200"/>
          <rect x="148" y="100" width="199" height="29" rx="14" fill="none" stroke="#808182" stroke-width="3.200"/>
          <rect x="4" y="641" width="199" height="23" rx="11" fill="none" stroke="#808182" stroke-width="3.200"/>
        </g>
        <g filter="url(#rough)">
          ${arrow(676, 41, 570, 42)}
          ${arrow(472, 116, 366, 115)}
          ${arrow(1037, 162, 1037, 91)}
          ${arrow(1148, 437, 1350, 435)}
          ${arrow(188, 562, 188, 645)}
          ${arrow(952, 638, 952, 723)}
        </g>
      </svg>
      ${labels.map(([t, x, y]) => `<span style="left:${x}px;top:${y}px">${t}</span>`).join('')}`;
  }
}

customElements.define('lo-icon', LoIcon);
customElements.define('lo-app', LoApp);
customElements.define('lo-titlebar', LoTitlebar);
customElements.define('lo-menubar', LoMenubar);
customElements.define('lo-toolbar', LoToolbar);
customElements.define('lo-formulabar', LoFormulabar);
customElements.define('lo-sheet', LoSheet);
customElements.define('lo-sheetbar', LoSheetbar);
customElements.define('lo-sidebar', LoSidebar);
customElements.define('lo-findbar', LoFindbar);
customElements.define('lo-statusbar', LoStatusbar);
customElements.define('lo-notes', LoNotes);
</script>
</body>
</html>
